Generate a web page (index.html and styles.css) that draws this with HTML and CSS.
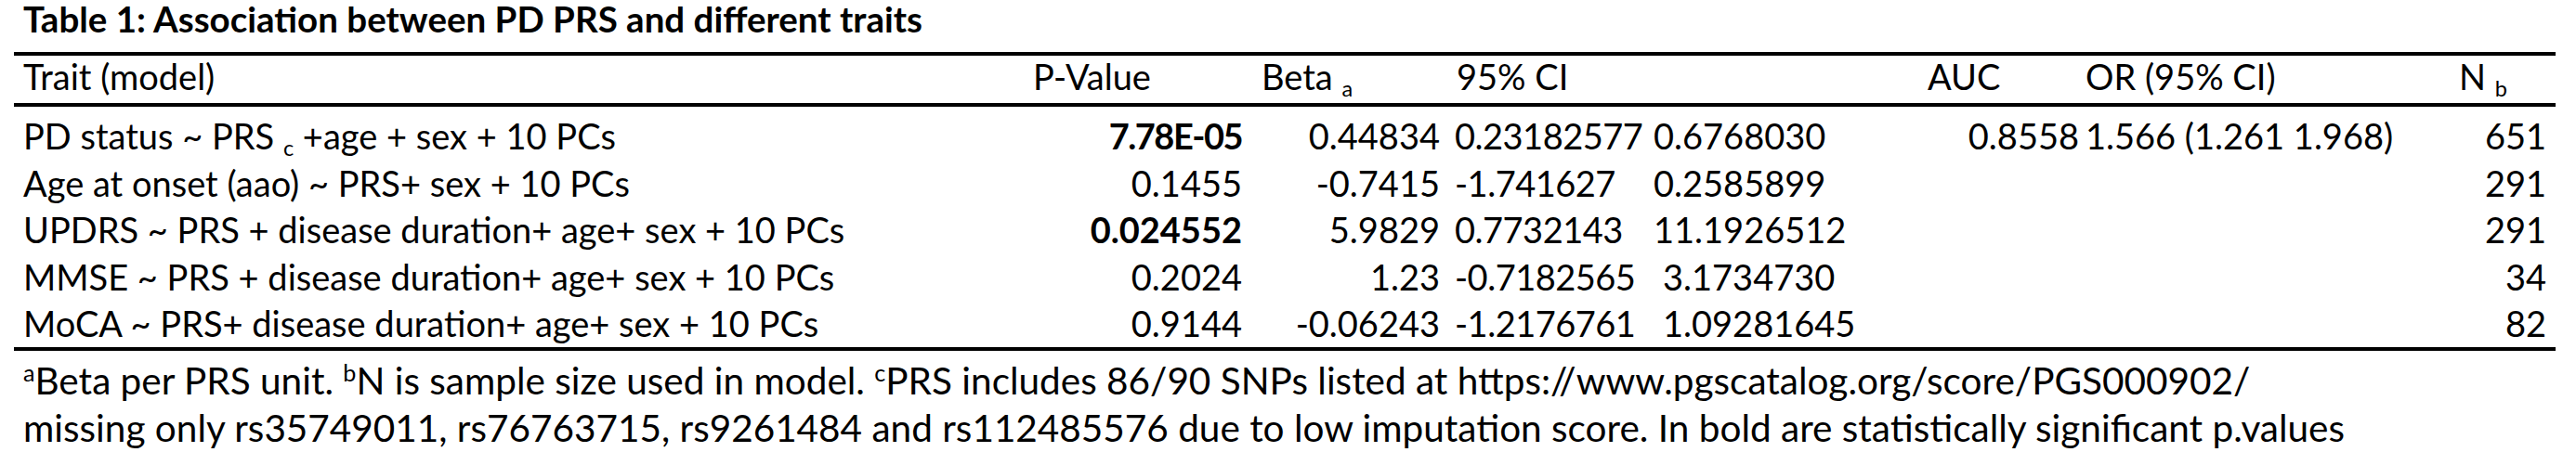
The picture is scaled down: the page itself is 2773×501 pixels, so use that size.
FILE: index.html
```html
<!DOCTYPE html>
<html lang="en">
<head>
<meta charset="utf-8">
<title>Table 1</title>
<link rel="stylesheet" href="styles.css">
</head>
<body>
<div class="page">
  <div class="title">Table 1: Association between PD PRS and different traits</div>
  <div class="tbl">
    <div class="row head">
      <div class="c c1">Trait (model)</div>
      <div class="c h2">P-Value</div>
      <div class="c h3">Beta <sub>a</sub></div>
      <div class="c h4">95% CI</div>
      <div class="c h5"></div>
      <div class="c h6">AUC</div>
      <div class="c h7">OR (95% CI)</div>
      <div class="c h8">N <sub>b</sub></div>
    </div>
    <div class="body">
      <div class="row">
        <div class="c c1">PD status ~ PRS <sub>c</sub> +age + sex + 10 PCs</div>
        <div class="c d2"><b class="tight">7.78E-05</b></div>
        <div class="c d3">0.44834</div>
        <div class="c d4">0.23182577</div>
        <div class="c d5">0.6768030</div>
        <div class="c d6">0.8558</div>
        <div class="c d7">1.566 (1.261 1.968)</div>
        <div class="c d8">651</div>
      </div>
      <div class="row">
        <div class="c c1">Age at onset (aao) ~ PRS+ sex + 10 PCs</div>
        <div class="c d2">0.1455</div>
        <div class="c d3">-0.7415</div>
        <div class="c d4">-1.741627</div>
        <div class="c d5">0.2585899</div>
        <div class="c d6"></div>
        <div class="c d7"></div>
        <div class="c d8">291</div>
      </div>
      <div class="row">
        <div class="c c1">UPDRS ~ PRS + disease duration+ age+ sex + 10 PCs</div>
        <div class="c d2"><b>0.024552</b></div>
        <div class="c d3">5.9829</div>
        <div class="c d4">0.7732143</div>
        <div class="c d5">11.1926512</div>
        <div class="c d6"></div>
        <div class="c d7"></div>
        <div class="c d8">291</div>
      </div>
      <div class="row">
        <div class="c c1">MMSE ~ PRS + disease duration+ age+ sex + 10 PCs</div>
        <div class="c d2">0.2024</div>
        <div class="c d3">1.23</div>
        <div class="c d4">-0.7182565</div>
        <div class="c d5 shift">3.1734730</div>
        <div class="c d6"></div>
        <div class="c d7"></div>
        <div class="c d8">34</div>
      </div>
      <div class="row">
        <div class="c c1">MoCA ~ PRS+ disease duration+ age+ sex + 10 PCs</div>
        <div class="c d2">0.9144</div>
        <div class="c d3">-0.06243</div>
        <div class="c d4">-1.2176761</div>
        <div class="c d5 shift">1.09281645</div>
        <div class="c d6"></div>
        <div class="c d7"></div>
        <div class="c d8">82</div>
      </div>
    </div>
  </div>
  <div class="notes">
    <div class="note"><sup>a</sup>Beta per PRS unit. <sup>b</sup>N is sample size used in model. <sup>c</sup>PRS includes 86/90 SNPs listed at https://www.pgscatalog.org/score/PGS000902/</div>
    <div class="note">missing only rs35749011, rs76763715, rs9261484 and rs112485576 due to low imputation score. In bold are statistically significant p.values</div>
  </div>
</div>
</body>
</html>
```

FILE: styles.css
```css
html, body {
  margin: 0;
  padding: 0;
  background: #ffffff;
}

body {
  font-family: Lato, "Open Sans", "Liberation Sans", sans-serif;
  font-size: 38px;
  color: #000000;
}

.page {
  padding-left: 15px;
  width: 2736px;
}

.title {
  font-weight: 700;
  font-size: 38.5px;
  line-height: 40px;
  padding-left: 10px;
  margin-bottom: 16px;
  white-space: nowrap;
}

.tbl {
  width: 2736px;
  border-top: 4px solid #000;
  border-bottom: 4px solid #000;
}

.row {
  display: grid;
  grid-template-columns: 1085px 245px 213px 212px 220px 252px 358px 151px;
  line-height: 50.5px;
  height: 50.5px;
}

.head {
  border-bottom: 4px solid #000;
  height: 51px;
  line-height: 45px;
}

.body {
  padding-top: 6px;
}

.c {
  white-space: nowrap;
  overflow: visible;
}

.c1 { padding-left: 10px; }

.h2 { padding-left: 12px; }
.h3 { padding-left: 13px; }
.h4 { padding-left: 10px; }
.h6 { padding-left: 85px; }
.h7 { padding-left: 3px; }
.h8 { padding-left: 47px; }

.d2 { text-align: right; padding-right: 8px; }
.d3 { text-align: right; padding-right: 8px; }
.d4 { padding-left: 8px; letter-spacing: -0.5px; }
.d5 { padding-left: 10px; }
.d5.shift { padding-left: 20px; }
.d6 { text-align: right; padding-right: 4px; }
.d7 { padding-left: 3px; }
.d8 { text-align: right; padding-right: 10px; }

sub {
  font-size: 0.62em;
  vertical-align: -0.3em;
  line-height: 0;
}

sup {
  font-size: 0.62em;
  vertical-align: 0.55em;
  line-height: 0;
}

b { font-weight: 700; }

.tight { letter-spacing: -1.5px; }

.notes {
  padding-top: 6px;
}

.note {
  font-size: 40.5px;
  line-height: 51px;
  padding-left: 10px;
  white-space: nowrap;
}
```
